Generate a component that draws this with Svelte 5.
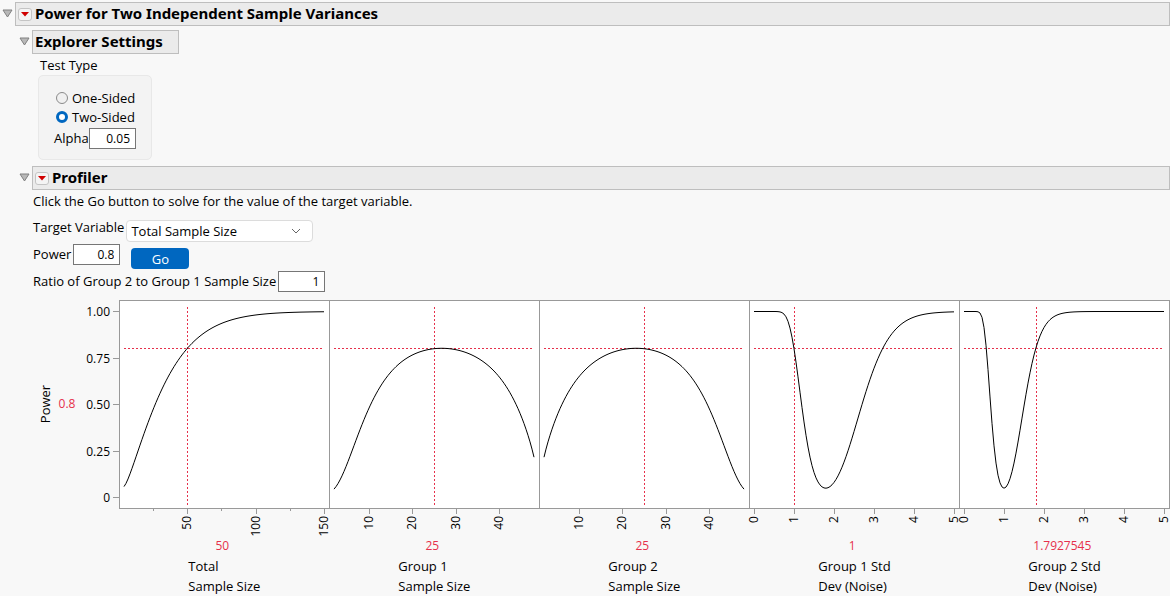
<script>
    let testType = 'two';
    let alpha = '0.05';
    let target = 'Total Sample Size';
    let power = '0.8';
    let ratio = '1';
    let open = { main: true, settings: true, profiler: true };

    const sd1 = 1;
    const sd2 = 1.7927545;

    function logGamma(x) {
        const c = [76.18009172947146, -86.50532032941677, 24.01409824083091, -1.231739572450155, 0.001208650973866179, -0.000005395239384953];
        let y = x;
        const t = x + 5.5 - (x + 0.5) * Math.log(x + 5.5);
        let s = 1.000000000190015;
        for (const k of c) s += k / ++y;
        return -t + Math.log(2.5066282746310005 * s / x);
    }

    // continued fraction for the incomplete beta
    function betaFraction(x, a, b) {
        let c = 1;
        let d = 1 / (1 - (a + b) * x / (a + 1));
        let h = d;
        for (let m = 1; m < 150; m++) {
            const even = m * (b - m) * x / ((a + 2 * m - 1) * (a + 2 * m));
            d = 1 / (1 + even * d);
            c = 1 + even / c;
            h *= d * c;
            const odd = -(a + m) * (a + b + m) * x / ((a + 2 * m) * (a + 2 * m + 1));
            d = 1 / (1 + odd * d);
            c = 1 + odd / c;
            h *= d * c;
            if (Math.abs(d * c - 1) < 1e-9) break;
        }
        return h;
    }

    function betaCdf(x, a, b) {
        if (x <= 0) return 0;
        if (x >= 1) return 1;
        const front = Math.exp(logGamma(a + b) - logGamma(a) - logGamma(b) + a * Math.log(x) + b * Math.log(1 - x));
        return x < (a + 1) / (a + b + 2) ? front * betaFraction(x, a, b) / a : 1 - front * betaFraction(1 - x, b, a) / b;
    }

    function betaQuantile(p, a, b) {
        let lo = 0;
        let hi = 1;
        for (let i = 0; i < 45; i++) {
            const mid = (lo + hi) / 2;
            if (betaCdf(mid, a, b) < p) lo = mid;
            else hi = mid;
        }
        return (lo + hi) / 2;
    }

    // two-sided F test of equal variances
    function testPower(n1, n2, s1, s2) {
        if (s1 <= 0 || s2 <= 0) return 1;
        const a = (n1 - 1) / 2;
        const b = (n2 - 1) / 2;
        const r = (s2 * s2) / (s1 * s1);
        const shift = q => (r * q) / (r * q + 1 - q);
        const low = betaQuantile(0.025, a, b);
        const high = betaQuantile(0.975, a, b);
        return betaCdf(shift(low), a, b) + 1 - betaCdf(shift(high), a, b);
    }

    const panels = [
        { lines: ['Total', 'Sample Size'], value: 50, min: 4, max: 150, ticks: [50, 100, 150], minor: [25, 75, 125], f: n => testPower(n / 2, n / 2, sd1, sd2) },
        { lines: ['Group 1', 'Sample Size'], value: 25, min: 2, max: 48, ticks: [10, 20, 30, 40], minor: [], f: n => testPower(n, 50 - n, sd1, sd2) },
        { lines: ['Group 2', 'Sample Size'], value: 25, min: 2, max: 48, ticks: [10, 20, 30, 40], minor: [], f: n => testPower(50 - n, n, sd1, sd2) },
        { lines: ['Group 1 Std', 'Dev (Noise)'], value: 1, min: 0, max: 5, ticks: [0, 1, 2, 3, 4, 5], minor: [], f: s => testPower(25, 25, s, sd2) },
        { lines: ['Group 2 Std', 'Dev (Noise)'], value: 1.7927545, min: 0, max: 5, ticks: [0, 1, 2, 3, 4, 5], minor: [], f: s => testPower(25, 25, sd1, s) }
    ];

    const yTicks = ['1.00', '0.75', '0.50', '0.25', '0'];

    const yPos = p => 197.5 - p * 186;
    const xPos = (panel, v) => 5 + (v - panel.min) / (panel.max - panel.min) * 200;
    // centre a 1px line on a pixel column or row
    const snapX = v => Math.round(v) + 0.5;
    const snapY = v => Math.floor(v) + 0.5;

    function curve(panel) {
        const points = [];
        for (let i = 0; i <= 100; i++) {
            const v = panel.min + (panel.max - panel.min) * i / 100;
            points.push(`${xPos(panel, v).toFixed(2)},${yPos(panel.f(v)).toFixed(2)}`);
        }
        return points.join(' ');
    }
</script>

<main>
    <header class="outline">
        <button class="disclose" aria-label="Toggle report" on:click={() => open.main = !open.main}>
            <svg viewBox="0 0 11 9"><path d="M1 1H10L5.500 8Z" /></svg>
        </button>
        <div class="bar wide">
            <button class="menu" aria-label="Report options"><svg viewBox="0 0 12 11"><path d="M2 3H10L6 7.500Z" /></svg></button>
            <h1>Power for Two Independent Sample Variances</h1>
        </div>
    </header>

    {#if open.main}
        <div class="body">
            <section class="settings">
                <div class="outline">
                    <button class="disclose" aria-label="Toggle settings" on:click={() => open.settings = !open.settings}>
                        <svg viewBox="0 0 11 9"><path d="M1 1H10L5.500 8Z" /></svg>
                    </button>
                    <div class="bar short"><h2>Explorer Settings</h2></div>
                </div>
                {#if open.settings}
                    <fieldset>
                        <legend>Test Type</legend>
                        <div class="box">
                            <label class="choice"><input type="radio" bind:group={testType} value="one" />One-Sided</label>
                            <label class="choice"><input type="radio" bind:group={testType} value="two" />Two-Sided</label>
                            <div class="alpha">
                                <label for="alpha">Alpha</label>
                                <input class="number" id="alpha" type="text" bind:value={alpha} />
                            </div>
                        </div>
                    </fieldset>
                {/if}
            </section>

            <section>
                <div class="outline">
                    <button class="disclose" aria-label="Toggle profiler" on:click={() => open.profiler = !open.profiler}>
                        <svg viewBox="0 0 11 9"><path d="M1 1H10L5.500 8Z" /></svg>
                    </button>
                    <div class="bar wide">
                        <button class="menu" aria-label="Profiler options"><svg viewBox="0 0 12 11"><path d="M2 3H10L6 7.500Z" /></svg></button>
                        <h2>Profiler</h2>
                    </div>
                </div>
                {#if open.profiler}
                    <div class="controls">
                        <p>Click the Go button to solve for the value of the target variable.</p>
                        <div class="row">
                            <label for="target">Target Variable</label>
                            <div class="select low">
                                <select id="target" bind:value={target}>
                                    <option>Total Sample Size</option>
                                    <option>Group 1 Std Dev</option>
                                    <option>Group 2 Std Dev</option>
                                </select>
                                <svg viewBox="0 0 10 6"><path d="M1 1L5 5L9 1" /></svg>
                            </div>
                        </div>
                        <div class="row">
                            <label for="power">Power</label>
                            <input class="number" id="power" type="text" bind:value={power} />
                            <button class="go low">Go</button>
                        </div>
                        <div class="row">
                            <label for="ratio">Ratio of Group 2 to Group 1 Sample Size</label>
                            <input class="number" id="ratio" type="text" bind:value={ratio} />
                        </div>
                    </div>
                {/if}
            </section>
        </div>

        {#if open.profiler}
            <div class="profiler">
                <svg viewBox="0 0 119 235">
                    <text class="name" transform="translate(50 104) rotate(-90)">Power</text>
                    <text class="current" x="67" y="108">0.8</text>
                    {#each yTicks as tick}
                        <text class="end" x="110" y={yPos(+tick) + 4.5}>{tick}</text>
                        <path class="frame" d="M113 {snapY(yPos(+tick))}H119" />
                    {/each}
                </svg>
                {#each panels as panel}
                    <figure>
                        <svg viewBox="0 0 210 235">
                            <rect class="plot" x="0.5" y="0.5" width="210" height="208" />
                            {#each panel.minor as tick}
                                <path class="frame" d="M{snapX(xPos(panel, tick))} 209V211" />
                            {/each}
                            {#each panel.ticks as tick}
                                <path class="frame" d="M{snapX(xPos(panel, tick))} 209V214" />
                                <text class="end" transform="translate({snapX(xPos(panel, tick)) + 3.5} 216) rotate(-90)">{tick}</text>
                            {/each}
                            <path class="guide" d="M5 48.500H203M{snapX(xPos(panel, panel.value))} 7V205" />
                            <polyline points={curve(panel)} />
                        </svg>
                        <figcaption>
                            <span class="value">{panel.value}</span>
                            {#each panel.lines as line}
                                <span>{line}</span>
                            {/each}
                        </figcaption>
                    </figure>
                {/each}
            </div>
        {/if}
    {/if}
</main>

<style>
    :global(body) {
        background: #f8f8f8;
    }

    main {
        padding-top: 2px;
        overflow: hidden;
        font: 13px/20px "Open Sans", "Noto Sans", sans-serif;
        color: #000;
    }

    button, input, select {
        font: inherit;
        color: inherit;
        margin: 0;
        padding: 0;
        box-sizing: border-box;
    }

    h1, h2, p {
        margin: 0;
    }

    h1, h2 {
        padding-bottom: 2px;
        font: bold 15px/20px "Noto Sans", sans-serif;
        white-space: nowrap;
    }

    .outline {
        display: flex;
    }

    .disclose {
        width: 15px;
        height: 22px;
        border: 0;
        background: none;
        display: flex;
        align-items: center;
        justify-content: center;
    }

    .disclose svg {
        width: 11px;
        height: 9px;
        fill: #b8b8b8;
        stroke: #808080;
    }

    .bar {
        display: flex;
        align-items: center;
        gap: 3px;
        height: 22px;
        padding: 0 2px;
        border: 1px solid #bebebe;
        background: #ebebeb;
    }

    .wide {
        flex: 1;
    }

    .short {
        padding-right: 15px;
    }

    .menu {
        width: 14px;
        height: 13px;
        border: 1px solid #c4c4c4;
        border-radius: 3px;
        background: #f4f4f4;
        display: flex;
    }

    .menu svg {
        width: 12px;
        height: 11px;
        fill: #d00000;
    }

    .body {
        padding: 4px 0 0 17px;
    }

    .settings {
        padding-bottom: 6px;
    }

    fieldset {
        border: 0;
        margin: 0 0 0 21px;
        padding: 0;
    }

    legend {
        padding: 1px 2px 0;
    }

    .box {
        width: 82px;
        padding: 12px 15px 10px;
        border: 1px solid #e8e8e8;
        border-radius: 5px;
        background: #f3f3f3;
    }

    .choice {
        display: flex;
        align-items: center;
        gap: 4px;
        height: 19px;
        padding-left: 2px;
        white-space: nowrap;
    }

    .choice input {
        appearance: none;
        width: 12px;
        height: 12px;
        border: 1px solid #8a8a8a;
        border-radius: 50%;
        background: #f0f0f0;
    }

    .choice input:checked {
        border: 3px solid #0067c0;
        background: #fff;
    }

    .alpha {
        display: flex;
        justify-content: space-between;
        padding-top: 2px;
    }

    .number {
        width: 47px;
        height: 21px;
        padding: 0 5px;
        border: 1px solid #767676;
        background: #fff;
        font-size: 12px;
        text-align: right;
    }

    .controls {
        padding: 1px 0 8px 16px;
    }

    p {
        margin-bottom: 6px;
    }

    .row {
        display: flex;
        gap: 2px;
        height: 25px;
        margin-bottom: 2px;
        white-space: nowrap;
    }

    .row:last-child {
        height: 21px;
        margin-bottom: 0;
    }

    .low {
        align-self: flex-end;
    }

    .select {
        position: relative;
        width: 187px;
        height: 22px;
    }

    select {
        appearance: none;
        width: 100%;
        height: 100%;
        padding: 0 4px;
        border: 1px solid #dcdcdc;
        border-radius: 4px;
        background: #fff;
    }

    .select svg {
        position: absolute;
        right: 12px;
        top: 8px;
        width: 10px;
        height: 6px;
        fill: none;
        stroke: #666;
        pointer-events: none;
    }

    .go {
        width: 58px;
        height: 21px;
        margin-left: 9px;
        border: 0;
        border-radius: 4px;
        background: #0067c0;
        color: #fff;
    }

    .profiler {
        display: grid;
        grid-template-columns: 119fr repeat(5, 210fr);
        padding-right: 1px;
    }

    .profiler svg {
        display: block;
        width: 100%;
        overflow: visible;
        font-size: 12px;
    }

    figure {
        margin: 0;
    }

    figcaption {
        width: 68px;
        margin-left: 33%;
        white-space: nowrap;
    }

    figcaption span {
        display: block;
    }

    figcaption .value {
        font-size: 12px;
        line-height: 21px;
        text-align: center;
        color: #e6304b;
    }

    .plot {
        fill: #fff;
        stroke: #999;
    }

    .frame {
        stroke: #999;
    }

    .guide {
        stroke: #e6304b;
        stroke-dasharray: 2 2;
    }

    polyline {
        fill: none;
        stroke: #000;
    }

    .name, .current {
        text-anchor: middle;
    }

    .name {
        font-size: 13px;
    }

    .current {
        fill: #e6304b;
    }

    .end {
        text-anchor: end;
    }
</style>
